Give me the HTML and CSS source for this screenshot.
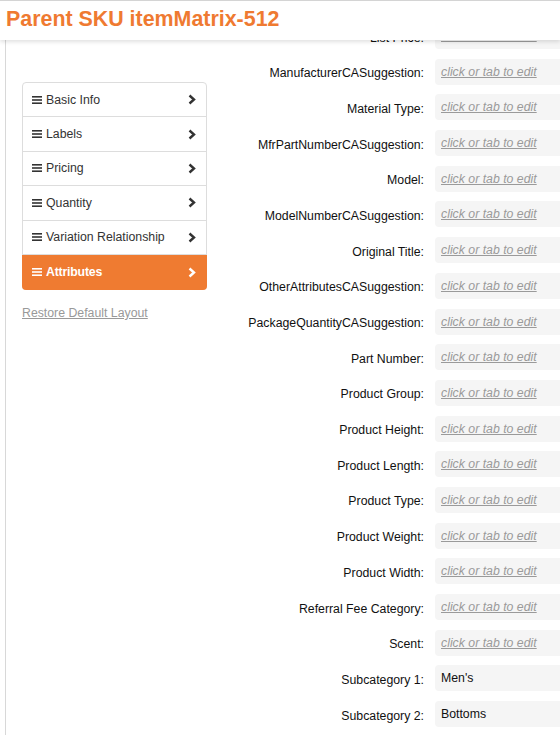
FILE: index.html
```html
<!DOCTYPE html>
<html lang="en">
<head>
<meta charset="utf-8">
<title>Parent SKU itemMatrix-512</title>
<link rel="stylesheet" href="styles.css">
</head>
<body>
<header class="page-header">
  <h1 class="page-title">Parent SKU itemMatrix-512</h1>
</header>
<main class="page-main">
  <aside class="sidebar">
    <nav class="menu">
      <a class="menu-item"><span class="menu-icon"><svg width="10" height="8" viewBox="0 0 10 8"><rect x="0" y="0" width="10" height="1.6" fill="currentColor"/><rect x="0" y="3.2" width="10" height="1.6" fill="currentColor"/><rect x="0" y="6.4" width="10" height="1.6" fill="currentColor"/></svg></span><span class="menu-label">Basic Info</span><span class="menu-chevron"><svg width="8" height="11" viewBox="0 0 8 11"><polyline points="1.5,1.5 6,5.5 1.5,9.5" fill="none" stroke="currentColor" stroke-width="2.4"/></svg></span></a>
      <a class="menu-item"><span class="menu-icon"><svg width="10" height="8" viewBox="0 0 10 8"><rect x="0" y="0" width="10" height="1.6" fill="currentColor"/><rect x="0" y="3.2" width="10" height="1.6" fill="currentColor"/><rect x="0" y="6.4" width="10" height="1.6" fill="currentColor"/></svg></span><span class="menu-label">Labels</span><span class="menu-chevron"><svg width="8" height="11" viewBox="0 0 8 11"><polyline points="1.5,1.5 6,5.5 1.5,9.5" fill="none" stroke="currentColor" stroke-width="2.4"/></svg></span></a>
      <a class="menu-item"><span class="menu-icon"><svg width="10" height="8" viewBox="0 0 10 8"><rect x="0" y="0" width="10" height="1.6" fill="currentColor"/><rect x="0" y="3.2" width="10" height="1.6" fill="currentColor"/><rect x="0" y="6.4" width="10" height="1.6" fill="currentColor"/></svg></span><span class="menu-label">Pricing</span><span class="menu-chevron"><svg width="8" height="11" viewBox="0 0 8 11"><polyline points="1.5,1.5 6,5.5 1.5,9.5" fill="none" stroke="currentColor" stroke-width="2.4"/></svg></span></a>
      <a class="menu-item"><span class="menu-icon"><svg width="10" height="8" viewBox="0 0 10 8"><rect x="0" y="0" width="10" height="1.6" fill="currentColor"/><rect x="0" y="3.2" width="10" height="1.6" fill="currentColor"/><rect x="0" y="6.4" width="10" height="1.6" fill="currentColor"/></svg></span><span class="menu-label">Quantity</span><span class="menu-chevron"><svg width="8" height="11" viewBox="0 0 8 11"><polyline points="1.5,1.5 6,5.5 1.5,9.5" fill="none" stroke="currentColor" stroke-width="2.4"/></svg></span></a>
      <a class="menu-item"><span class="menu-icon"><svg width="10" height="8" viewBox="0 0 10 8"><rect x="0" y="0" width="10" height="1.6" fill="currentColor"/><rect x="0" y="3.2" width="10" height="1.6" fill="currentColor"/><rect x="0" y="6.4" width="10" height="1.6" fill="currentColor"/></svg></span><span class="menu-label">Variation Relationship</span><span class="menu-chevron"><svg width="8" height="11" viewBox="0 0 8 11"><polyline points="1.5,1.5 6,5.5 1.5,9.5" fill="none" stroke="currentColor" stroke-width="2.4"/></svg></span></a>
      <a class="menu-item is-active"><span class="menu-icon"><svg width="10" height="8" viewBox="0 0 10 8"><rect x="0" y="0" width="10" height="1.6" fill="currentColor"/><rect x="0" y="3.2" width="10" height="1.6" fill="currentColor"/><rect x="0" y="6.4" width="10" height="1.6" fill="currentColor"/></svg></span><span class="menu-label">Attributes</span><span class="menu-chevron"><svg width="8" height="11" viewBox="0 0 8 11"><polyline points="1.5,1.5 6,5.5 1.5,9.5" fill="none" stroke="currentColor" stroke-width="2.4"/></svg></span></a>
    </nav>
    <a class="restore-link">Restore Default Layout</a>
  </aside>
  <section class="fields">
    <div class="field-label">List Price:</div><div class="field-value"><span class="placeholder">click or tab to edit</span></div>
    <div class="field-label">ManufacturerCASuggestion:</div><div class="field-value"><span class="placeholder">click or tab to edit</span></div>
    <div class="field-label">Material Type:</div><div class="field-value"><span class="placeholder">click or tab to edit</span></div>
    <div class="field-label">MfrPartNumberCASuggestion:</div><div class="field-value"><span class="placeholder">click or tab to edit</span></div>
    <div class="field-label">Model:</div><div class="field-value"><span class="placeholder">click or tab to edit</span></div>
    <div class="field-label">ModelNumberCASuggestion:</div><div class="field-value"><span class="placeholder">click or tab to edit</span></div>
    <div class="field-label">Original Title:</div><div class="field-value"><span class="placeholder">click or tab to edit</span></div>
    <div class="field-label">OtherAttributesCASuggestion:</div><div class="field-value"><span class="placeholder">click or tab to edit</span></div>
    <div class="field-label">PackageQuantityCASuggestion:</div><div class="field-value"><span class="placeholder">click or tab to edit</span></div>
    <div class="field-label">Part Number:</div><div class="field-value"><span class="placeholder">click or tab to edit</span></div>
    <div class="field-label">Product Group:</div><div class="field-value"><span class="placeholder">click or tab to edit</span></div>
    <div class="field-label">Product Height:</div><div class="field-value"><span class="placeholder">click or tab to edit</span></div>
    <div class="field-label">Product Length:</div><div class="field-value"><span class="placeholder">click or tab to edit</span></div>
    <div class="field-label">Product Type:</div><div class="field-value"><span class="placeholder">click or tab to edit</span></div>
    <div class="field-label">Product Weight:</div><div class="field-value"><span class="placeholder">click or tab to edit</span></div>
    <div class="field-label">Product Width:</div><div class="field-value"><span class="placeholder">click or tab to edit</span></div>
    <div class="field-label">Referral Fee Category:</div><div class="field-value"><span class="placeholder">click or tab to edit</span></div>
    <div class="field-label">Scent:</div><div class="field-value"><span class="placeholder">click or tab to edit</span></div>
    <div class="field-label">Subcategory 1:</div><div class="field-value">Men's</div>
    <div class="field-label">Subcategory 2:</div><div class="field-value">Bottoms</div>
  </section>
</main>
</body>
</html>
```
FILE: styles.css
```css
html, body {
  margin: 0;
  padding: 0;
  overflow: hidden;
  background: #ffffff;
}
body {
  font-family: "Liberation Sans", Arial, sans-serif;
  font-size: 12px;
  color: #222222;
  width: 560px;
  height: 735px;
}
.page-header {
  position: relative;
  z-index: 2;
  height: 40px;
  box-sizing: border-box;
  border-top: 1px solid #d4d4d4;
  background: #ffffff;
  box-shadow: 0 2px 4px rgba(0, 0, 0, 0.12);
}
.page-title {
  margin: 0;
  padding-left: 6px;
  font-size: 21.4px;
  line-height: 36px;
  font-weight: bold;
  color: #ef7a31;
  white-space: nowrap;
}
.page-main {
  display: flex;
  margin-left: 5px;
  border-left: 1px solid #d8d8d8;
  height: 695px;
}
.sidebar {
  flex: 0 0 auto;
  width: 185px;
  padding: 42px 0 0 16px;
}
.menu {
  display: flex;
  flex-direction: column;
  border: 1px solid #dddddd;
  border-radius: 4px;
  background: #ffffff;
}
.menu-item {
  display: flex;
  align-items: center;
  height: 33.4px;
  border-bottom: 1px solid #dddddd;
  padding: 0 9px 0 9px;
  color: #333333;
  font-size: 12.3px;
}
.menu-item.is-active {
  margin: 0 -1px -1px -1px;
  padding: 0 10px 0 10px;
  height: 35px;
  border-bottom: none;
  background: #ef7b31;
  color: #ffffff;
  border-radius: 0 0 4px 4px;
  font-weight: bold;
  letter-spacing: -0.2px;
}
.menu-icon {
  display: flex;
  width: 10px;
  margin-right: 4px;
}
.menu-label {
  flex: 1;
  white-space: nowrap;
}
.menu-chevron {
  display: flex;
  margin-right: 1px;
}
.restore-link {
  display: block;
  margin-top: 16px;
  color: #999999;
  text-decoration: underline;
  font-size: 12.3px;
}
.fields {
  flex: 1;
  display: grid;
  grid-template-columns: 1fr 135px;
  grid-auto-rows: 26px;
  column-gap: 11px;
  row-gap: 9.7px;
  margin-top: -17px;
  margin-right: -10px;
  align-content: start;
}
.field-label {
  display: flex;
  align-items: center;
  justify-content: flex-end;
  padding-top: 3px;
  white-space: nowrap;
  color: #111111;
  font-size: 12.3px;
}
.field-value {
  display: flex;
  align-items: center;
  padding: 0 6px;
  background: #f5f5f5;
  border-radius: 4px;
  font-size: 12.3px;
  color: #111111;
  white-space: nowrap;
  overflow: hidden;
}
.placeholder {
  font-style: italic;
  text-decoration: underline;
  color: #9a9a9a;
}
```
